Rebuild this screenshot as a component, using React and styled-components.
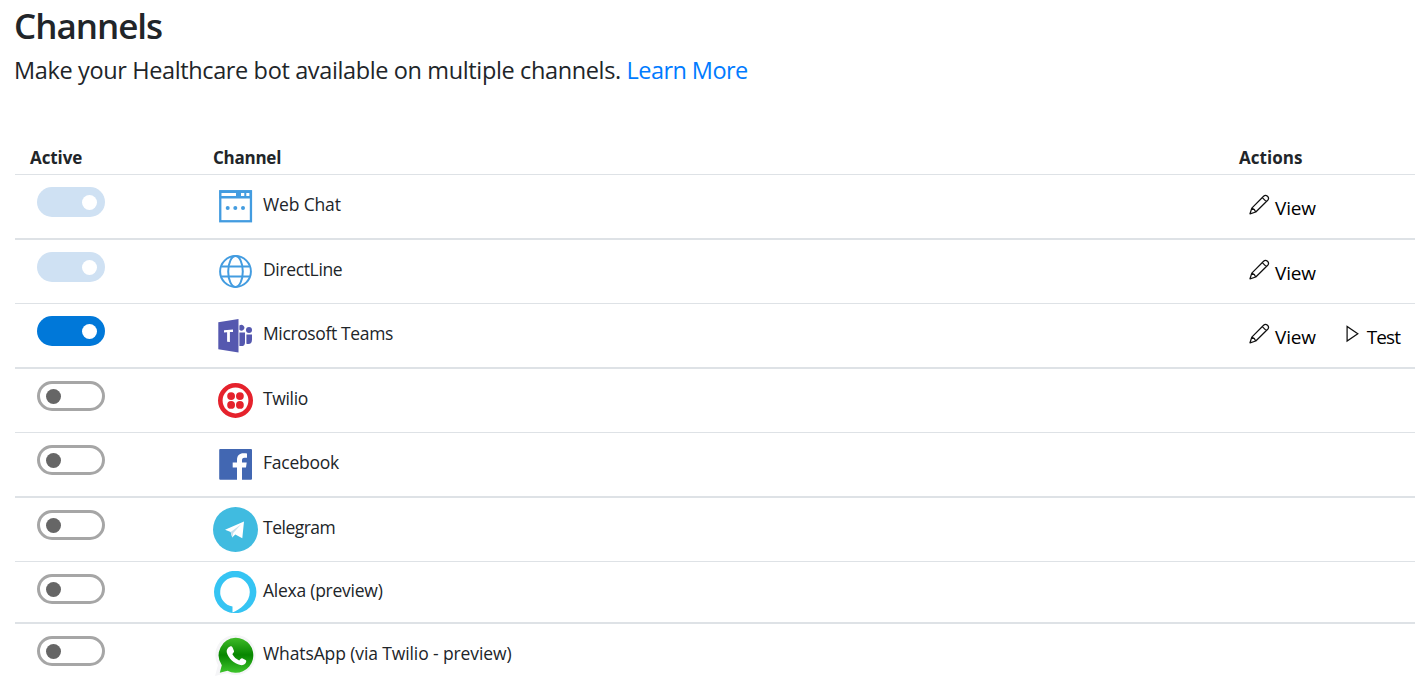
import React from "react";
import styled, { createGlobalStyle, css } from "styled-components";

const GlobalStyle = createGlobalStyle`
  *, *::before, *::after { box-sizing: border-box; }
  html, body { margin: 0; background: #fff; overflow: hidden; }
  body {
    height: 685px;
    font-family: "Segoe UI", "Open Sans", "Noto Sans", sans-serif;
    color: #212529;
  }
`;

const Page = styled.main`
  height: 685px;
  padding: 5px 0 0 15px;
  overflow: hidden;
`;

const Title = styled.h1`
  margin: 0 0 0 -1px;
  height: 42px;
  font-size: 35px;
  line-height: 42px;
  font-weight: 600;
  letter-spacing: -1px;
`;

const Intro = styled.p`
  margin: 5px 0 0 -1px;
  height: 36px;
  font-size: 23.5px;
  line-height: 36px;
  letter-spacing: -0.37px;
  white-space: nowrap;
`;

const Link = styled.a`
  color: #007bff;
  letter-spacing: -0.55px;
  text-decoration: none;
`;

const Table = styled.div`
  margin-top: 54px;
`;

const columns = css`
  display: grid;
  grid-template-columns: 198px 1026px 1fr;
`;

const HeaderRow = styled.div`
  ${columns}
  height: 32px;
  font-size: 17px;
  line-height: 31px;
  font-weight: 700;
`;

const HeaderCell = styled.div`
  padding-left: ${(p) => p.$inset || 0}px;
  letter-spacing: ${(p) => p.$tracking || 0}px;
`;

const Row = styled.div`
  ${columns}
  height: ${(p) => p.$height}px;
  border-top: ${(p) => p.$line}px solid #dee2e6;
`;

const ToggleCell = styled.div`
  padding: 12px 0 0 22px;
`;

const toggleLooks = {
  locked: css`background: #cfe1f3; color: #fff; justify-content: flex-end;`,
  on: css`background: #0078d9; color: #fff; justify-content: flex-end;`,
  off: css`border: 3px solid #a6a6a6; color: #666; padding: 0 6px;`,
};

const Toggle = styled.div`
  display: flex;
  align-items: center;
  width: 68px;
  height: 30px;
  padding: 0 8px;
  border-radius: 15px;
  ${(p) => toggleLooks[p.$state]}
`;

const Knob = styled.span`
  width: 15px;
  height: 15px;
  border-radius: 50%;
  background: currentColor;
`;

const ChannelCell = styled.div`
  display: flex;
  padding-top: 9px;
  gap: 5px;
`;

const IconBox = styled.span`
  width: 45px;
  height: 45px;
  svg { display: block; }
`;

const ChannelName = styled.span`
  height: 42px;
  font-size: 17.5px;
  line-height: ${(p) => p.$lineHeight}px;
  letter-spacing: ${(p) => p.$tracking}px;
  white-space: nowrap;
`;

const ActionsCell = styled.div`
  display: flex;
  align-items: flex-start;
  gap: 30px;
  padding: 19px 0 0 10px;
  color: #000;
`;

const Action = styled.span`
  display: flex;
  gap: ${(p) => p.$gap}px;
  font-size: 19px;
  line-height: 28px;
  letter-spacing: ${(p) => p.$tracking}px;
  svg { display: block; }
`;

const WebChatIcon = () => (
  <svg width="45" height="45" viewBox="0 0 45 45" fill="none">
    <rect x="7.25" y="7.25" width="30.7" height="30" stroke="#439ce0" strokeWidth="2.3" />
    <path d="M6.5 6.5H38.5V14.5H6.5Z" fill="#439ce0" />
    <path d="M8.5 9H23V12H8.5ZM28 9H31.3V12H28ZM33.3 9H36.4V12H33.3Z" fill="#fff" />
    <circle cx="14.7" cy="24" r="2" fill="#439ce0" />
    <circle cx="22.3" cy="24" r="2" fill="#439ce0" />
    <circle cx="30" cy="24" r="2" fill="#439ce0" />
  </svg>
);

const GlobeIcon = () => (
  <svg width="45" height="45" viewBox="0 0 45 45" fill="none" stroke="#439ce0" strokeWidth="2">
    <circle cx="22.5" cy="22.5" r="15.4" />
    <ellipse cx="22.5" cy="22.5" rx="7.3" ry="15.4" />
    <path d="M8.6 17.4H36.4M8.6 27.6H36.4" />
  </svg>
);

const TeamsIcon = () => (
  <svg width="45" height="45" viewBox="0 0 45 45" fill="#5558af">
    <path d="M5.3 9.3L25.5 6V39.5L5.3 36.2Z" />
    <path d="M26.4 12.6A2.9 2.9 0 1 1 26.4 16.8Z" />
    <circle cx="36" cy="17" r="3" />
    <path d="M26.4 19.6H32V29.5Q32 34 26.4 32.9ZM33.4 21.6H39V26.5Q39 32 33.4 30.8Z" />
    <path d="M11 17.2L20 16.4V18.9L16.9 19.1V29L14.1 28.8V19.3L11 19.5Z" fill="#fff" />
  </svg>
);

const TwilioIcon = () => (
  <svg width="45" height="45" viewBox="0 0 45 45" fill="#e5222c">
    <circle cx="22.5" cy="22.5" r="15.2" fill="none" stroke="#e5222c" strokeWidth="4.6" />
    <circle cx="18.1" cy="18.1" r="3.9" />
    <circle cx="26.9" cy="18.1" r="3.9" />
    <circle cx="18.1" cy="26.9" r="3.9" />
    <circle cx="26.9" cy="26.9" r="3.9" />
  </svg>
);

const FacebookIcon = () => (
  <svg width="45" height="45" viewBox="0 0 45 45">
    <rect x="6.2" y="7" width="32.8" height="30.8" rx="1" fill="#4267b2" />
    <path d="M24 38V25.4H19.7V20.6H24V18.2C24 13.4 26.6 11.3 30.4 11.3C32 11.3 33.2 11.4 34 11.5V15.8H31.5C29.5 15.8 29 16.9 29 18.5V20.6H33.7L33 25.4H29V38Z" fill="#fff" />
  </svg>
);

const TelegramIcon = () => (
  <svg width="45" height="45" viewBox="0 0 45 45">
    <circle cx="22.5" cy="22.5" r="22.5" fill="#40bbe0" />
    <path d="M12 22.8L31 14.4L29.3 31.3L22.3 27.5L19.2 30.5L17.7 25.1Z" fill="#fff" />
    <path d="M17.7 25.1L28.2 17.3L20.3 26.1L19.2 30.5Z" fill="#c5dfec" />
  </svg>
);

const AlexaIcon = () => (
  <svg width="45" height="42" viewBox="0 0 45 42">
    <circle cx="22.2" cy="21" r="21.2" fill="#35c4f3" />
    <path d="M22.2 6.3A14.7 14.7 0 0 1 36.8 21C36.8 31.5 26.8 38.5 19.5 41.5V35.5A14.7 14.7 0 0 1 22.2 6.3Z" fill="#fff" />
  </svg>
);

const WhatsAppIcon = () => (
  <svg width="45" height="45" viewBox="0 0 45 45">
    <defs>
      <linearGradient id="waGreen" x1="0" y1="0" x2="0" y2="1">
        <stop offset="0" stopColor="#3fbb28" />
        <stop offset="0.49" stopColor="#078600" />
        <stop offset="1" stopColor="#3fc52c" />
      </linearGradient>
    </defs>
    <path d="M22.3 2A20 20 0 1 1 14 40L2 43L5 32A20 20 0 0 1 22.3 2Z" fill="#f5f5f7" />
    <path d="M22.5 4.8A17.5 17.5 0 1 1 14.5 37.7L6.8 39.8L8.8 32.2A17.5 17.5 0 0 1 22.5 4.8Z" fill="url(#waGreen)" />
    <path d="M17 13.5C18.3 13 19.2 13.5 19.8 15L21 18C21.4 19 20 20.3 19.3 21.1C20.7 24 23.4 26.4 26.2 27.5C27.3 26.6 28.1 24.9 29.2 25.3L32.5 27C33.6 27.6 33.4 28.4 32.8 29.7C32 31.7 29.3 32.5 27.3 32C21 30.7 15.5 25.5 13.8 19.5C13.2 17 14.6 14.5 17 13.5Z" fill="#fff" />
  </svg>
);

const PencilIcon = () => (
  <svg width="21" height="21" viewBox="0 0 21 21" fill="none" stroke="#111" strokeWidth="1.25" strokeLinejoin="round">
    <path d="M1 19.8L2.8 14.1L14.6 2.2Q16.4 .4 18.5 2.3Q20.5 4.3 18.7 6.2L6.8 18L1 19.8ZM2.8 14.1Q5.7 14.9 6.8 18M13.3 3.6L17.3 7.6" />
  </svg>
);

const PlayIcon = () => (
  <svg width="13" height="21" viewBox="0 0 13 21" fill="none" stroke="#111" strokeWidth="1.25">
    <path d="M1.1 3.4V18L11.8 10.7Z" />
  </svg>
);

const channels = [
  { name: "Web Chat", Icon: WebChatIcon, state: "locked", height: 64, view: true, tracking: -0.15 },
  { name: "DirectLine", Icon: GlobeIcon, state: "locked", height: 65, view: true, tracking: -0.35 },
  { name: "Microsoft Teams", Icon: TeamsIcon, state: "on", height: 64, view: true, test: true, tracking: -0.37 },
  { name: "Twilio", Icon: TwilioIcon, state: "off", height: 65, tracking: -0.35 },
  { name: "Facebook", Icon: FacebookIcon, state: "off", height: 64, tracking: -0.25 },
  { name: "Telegram", Icon: TelegramIcon, state: "off", height: 65, tracking: -0.5 },
  { name: "Alexa (preview)", Icon: AlexaIcon, state: "off", height: 61, lineHeight: 39, tracking: -0.25 },
  { name: "WhatsApp (via Twilio - preview)", Icon: WhatsAppIcon, state: "off", height: 65, tracking: -0.11 },
];

export default function App() {
  return (
    <>
      <GlobalStyle />
      <Page>
        <Title>Channels</Title>
        <Intro>
          Make your Healthcare bot available on multiple channels. <Link>Learn More</Link>
        </Intro>
        <Table>
          <HeaderRow>
            <HeaderCell $inset={15} $tracking={-0.1}>Active</HeaderCell>
            <HeaderCell $tracking={-0.25}>Channel</HeaderCell>
            <HeaderCell $tracking={0.05}>Actions</HeaderCell>
          </HeaderRow>
          {channels.map(({ name, Icon, state, height, view, test, tracking, lineHeight = 41 }, i) => (
            <Row key={name} $height={height} $line={i % 2 ? 2 : 1}>
              <ToggleCell>
                <Toggle $state={state}><Knob /></Toggle>
              </ToggleCell>
              <ChannelCell>
                <IconBox><Icon /></IconBox>
                <ChannelName $lineHeight={lineHeight} $tracking={tracking}>{name}</ChannelName>
              </ChannelCell>
              <ActionsCell>
                {view && <Action $gap={5} $tracking={-0.2}><PencilIcon />View</Action>}
                {test && <Action $gap={8} $tracking={-0.9}><PlayIcon />Test</Action>}
              </ActionsCell>
            </Row>
          ))}
        </Table>
      </Page>
    </>
  );
}
